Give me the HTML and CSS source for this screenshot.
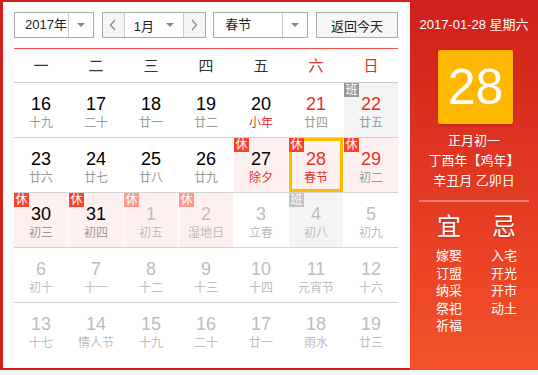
FILE: index.html
```html
<!DOCTYPE html>
<html lang="zh-CN">
<head>
<meta charset="utf-8">
<title>万年历</title>
<link rel="stylesheet" href="styles.css">
</head>
<body>
<div class="cal">
  <div class="main">
    <div class="toolbar">
      <div class="sel sel-year"><span class="sel-text">2017年</span><span class="sel-arrow"><i class="tri"></i></span></div>
      <div class="month-group">
        <span class="nav"><svg width="8" height="12" viewBox="0 0 8 12"><polyline points="6,1 1.5,6 6,11" fill="none" stroke="#888" stroke-width="1.2"/></svg></span>
        <span class="month-sel"><span class="month-text">1月</span><i class="tri"></i></span>
        <span class="nav"><svg width="8" height="12" viewBox="0 0 8 12"><polyline points="2,1 6.5,6 2,11" fill="none" stroke="#888" stroke-width="1.2"/></svg></span>
      </div>
      <div class="sel sel-hol"><span class="sel-text">春节</span><span class="sel-arrow"><i class="tri"></i></span></div>
      <button class="today">返回今天</button>
    </div>

    <div class="week-head">
      <span>一</span><span>二</span><span>三</span><span>四</span><span>五</span><span class="wk">六</span><span class="wk">日</span>
    </div>

    <div class="weeks">
      <div class="week">
        <div class="day"><b>16</b><em>十九</em></div>
        <div class="day"><b>17</b><em>二十</em></div>
        <div class="day"><b>18</b><em>廿一</em></div>
        <div class="day"><b>19</b><em>廿二</em></div>
        <div class="day"><b>20</b><em class="fest">小年</em></div>
        <div class="day wkend"><b>21</b><em>廿四</em></div>
        <div class="day wkend work"><i class="tag tag-work">班</i><b>22</b><em>廿五</em></div>
      </div>
      <div class="week">
        <div class="day"><b>23</b><em>廿六</em></div>
        <div class="day"><b>24</b><em>廿七</em></div>
        <div class="day"><b>25</b><em>廿八</em></div>
        <div class="day"><b>26</b><em>廿九</em></div>
        <div class="day rest"><i class="tag tag-rest">休</i><b>27</b><em class="fest">除夕</em></div>
        <div class="day wkend rest selected"><i class="tag tag-rest">休</i><b>28</b><em class="fest">春节</em></div>
        <div class="day wkend rest"><i class="tag tag-rest">休</i><b>29</b><em>初二</em></div>
      </div>
      <div class="week">
        <div class="day rest"><i class="tag tag-rest">休</i><b>30</b><em>初三</em></div>
        <div class="day rest"><i class="tag tag-rest">休</i><b>31</b><em>初四</em></div>
        <div class="day rest out"><i class="tag tag-rest">休</i><b>1</b><em>初五</em></div>
        <div class="day rest out"><i class="tag tag-rest">休</i><b>2</b><em>湿地日</em></div>
        <div class="day out"><b>3</b><em>立春</em></div>
        <div class="day work out"><i class="tag tag-work">班</i><b>4</b><em>初八</em></div>
        <div class="day out"><b>5</b><em>初九</em></div>
      </div>
      <div class="week">
        <div class="day out"><b>6</b><em>初十</em></div>
        <div class="day out"><b>7</b><em>十一</em></div>
        <div class="day out"><b>8</b><em>十二</em></div>
        <div class="day out"><b>9</b><em>十三</em></div>
        <div class="day out"><b>10</b><em>十四</em></div>
        <div class="day out"><b>11</b><em>元宵节</em></div>
        <div class="day out"><b>12</b><em>十六</em></div>
      </div>
      <div class="week">
        <div class="day out"><b>13</b><em>十七</em></div>
        <div class="day out"><b>14</b><em>情人节</em></div>
        <div class="day out"><b>15</b><em>十九</em></div>
        <div class="day out"><b>16</b><em>二十</em></div>
        <div class="day out"><b>17</b><em>廿一</em></div>
        <div class="day out"><b>18</b><em>雨水</em></div>
        <div class="day out"><b>19</b><em>廿三</em></div>
      </div>
    </div>
  </div>

  <div class="side">
    <div class="side-date">2017-01-28 星期六</div>
    <div class="big-day">28</div>
    <div class="lunar">
      <div>正月初一</div>
      <div>丁酉年【鸡年】</div>
      <div>辛丑月 乙卯日</div>
    </div>
    <div class="side-line"></div>
    <div class="yiji">
      <div class="yj-col">
        <div class="yj-title">宜</div>
        <div class="yj-item">嫁娶</div>
        <div class="yj-item">订盟</div>
        <div class="yj-item">纳采</div>
        <div class="yj-item">祭祀</div>
        <div class="yj-item">祈福</div>
      </div>
      <div class="yj-col">
        <div class="yj-title">忌</div>
        <div class="yj-item">入宅</div>
        <div class="yj-item">开光</div>
        <div class="yj-item">开市</div>
        <div class="yj-item">动土</div>
      </div>
    </div>
  </div>
</div>
</body>
</html>
```

FILE: styles.css
```css
html, body {
  margin: 0;
  padding: 0;
  background: #f5f5f5;
}

body {
  font-family: "Liberation Sans", "Noto Sans CJK SC", sans-serif;
  font-size: 13px;
  color: #333;
}

.cal {
  display: flex;
  width: 538px;
  height: 370px;
}

.main {
  box-sizing: border-box;
  width: 410px;
  height: 370px;
  background: #fff;
  border: 2px solid #d21f1b;
  border-left-width: 3px;
  border-right: 0;
  padding: 10px 12px 0 11px;
}

/* toolbar */
.toolbar {
  display: flex;
  justify-content: space-between;
  align-items: stretch;
  height: 26px;
  padding-bottom: 10px;
  border-bottom: 1px solid #f4524a;
}

.sel {
  box-sizing: border-box;
  display: flex;
  height: 26px;
  border: 1px solid #aaa;
  background: #fff;
}

.sel-year { width: 80px; }
.sel-hol { width: 95px; }

.sel-text {
  flex: 1;
  line-height: 24px;
  padding-left: 10px;
  color: #222;
}

.sel-hol .sel-text { padding-left: 11px; }

.sel-arrow {
  width: 24px;
  border-left: 1px solid #ccc;
  display: flex;
  align-items: center;
  justify-content: center;
}

.tri {
  display: block;
  width: 0;
  height: 0;
  border-left: 4px solid transparent;
  border-right: 4px solid transparent;
  border-top: 4px solid #888;
}

.month-group {
  box-sizing: border-box;
  display: flex;
  width: 104px;
  height: 26px;
  border: 1px solid #aaa;
}

.nav {
  width: 21px;
  background: #f5f5f5;
  display: flex;
  align-items: center;
  justify-content: center;
}

.month-sel {
  flex: 1;
  display: flex;
  align-items: center;
  border-left: 1px solid #ccc;
  border-right: 1px solid #ccc;
  background: #fff;
  padding-left: 9px;
  padding-right: 9px;
}

.month-text {
  flex: 1;
  color: #222;
}

.today {
  box-sizing: border-box;
  width: 82px;
  height: 26px;
  margin: 0;
  padding: 0;
  border: 1px solid #aaa;
  background: #f6f6f6;
  font-family: "Liberation Sans", "Noto Sans CJK SC", sans-serif;
  font-size: 13px;
  color: #222;
}

/* week header */
.week-head {
  display: grid;
  grid-template-columns: repeat(7, 54px);
  column-gap: 1px;
  height: 33px;
  border-bottom: 1px solid #ccc;
}

.week-head span {
  text-align: center;
  line-height: 33px;
  font-size: 15px;
  color: #333;
}

.week-head .wk { color: #e3302b; }

/* day grid */
.week {
  display: grid;
  grid-template-columns: repeat(7, 54px);
  column-gap: 1px;
  height: 54px;
  border-bottom: 1px solid #d2d2d2;
}

.week:last-child { border-bottom: 0; }

.day {
  position: relative;
  display: flex;
  flex-direction: column;
  align-items: center;
  padding-top: 10px;
  box-sizing: border-box;
}

.day b {
  font-weight: normal;
  font-size: 18px;
  line-height: 22px;
  color: #000;
}

.day em {
  font-style: normal;
  font-size: 12px;
  line-height: 16px;
  color: #999;
}

.day.wkend b { color: #e3302b; }
.day em.fest { color: #e3302b; }

.day.rest { background: #fff0f0; }
.day.work { background: #f4f4f4; }

.day.out b,
.day.out em { color: #bdbdbd; }

.day.selected {
  box-shadow: inset 0 0 0 3px #ffbb00;
}

.tag {
  position: absolute;
  top: 0;
  left: 0;
  width: 15px;
  height: 14px;
  font-style: normal;
  font-size: 12px;
  line-height: 14px;
  text-align: center;
  color: #fff;
}

.tag-rest { background: #f5432f; }
.tag-work { background: #999; }
.day.out .tag-rest { background: #f99a90; }
.day.out .tag-work { background: #c4c4c4; }

/* side panel */
.side {
  width: 128px;
  height: 370px;
  background: linear-gradient(to bottom, #cf201b 0%, #f5522a 100%);
  color: #fff;
  display: flex;
  flex-direction: column;
  align-items: center;
  padding-top: 15px;
  box-sizing: border-box;
}

.side-date {
  font-size: 13px;
  line-height: 20px;
}

.big-day {
  margin-top: 15px;
  width: 75px;
  height: 74px;
  background: #ffb800;
  border-radius: 2px;
  box-shadow: 0 1px 3px rgba(120, 0, 0, 0.35);
  display: flex;
  align-items: center;
  justify-content: center;
  font-size: 50px;
  line-height: 1;
  margin-left: 3px;
}

.lunar {
  margin-top: 7px;
  text-align: center;
  font-size: 13px;
  line-height: 20px;
}

.side-line {
  margin-top: 9px;
  width: 110px;
  height: 2px;
  background: rgba(255, 255, 255, 0.35);
}

.yiji {
  align-self: flex-start;
  display: flex;
  gap: 29px;
  padding-left: 26px;
  margin-top: 10px;
}

.yj-col {
  width: 26px;
  display: flex;
  flex-direction: column;
  align-items: center;
}

.yj-title {
  font-size: 24px;
  line-height: 30px;
  margin-bottom: 5px;
  text-shadow: 1px 1px 2px rgba(90, 0, 0, 0.35);
}

.yj-item {
  font-size: 13px;
  line-height: 17.5px;
}
```
